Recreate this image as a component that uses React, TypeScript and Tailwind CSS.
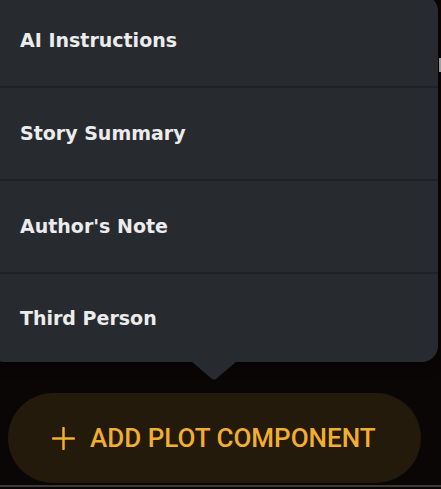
const ITEMS = ['AI Instructions', 'Story Summary', "Author's Note", 'Third Person'];

export default function App() {
  return (
    <div className="relative h-[489px] w-[441px] overflow-hidden bg-[#0a0605]">
      {/* faint content peeking at the right edge */}
      <div className="absolute right-0 top-[58px] h-[14px] w-[2px] bg-[#bfbfbf]" />

      <div className="flex flex-col">
        {/* popover menu */}
        <div className="relative z-10 ml-[-12px] mt-[-5px] w-[450px]">
          <div className="flex flex-col overflow-hidden rounded-[16px] bg-[#272b30] shadow-[0_4px_12px_rgba(0,0,0,0.5)]">
            {ITEMS.map((label, i) => (
              <div
                key={label}
                className={`flex items-center pl-[32px] ${i < ITEMS.length - 1 ? 'h-[93px] border-b-2 border-[#1e2125]' : 'h-[88px]'}`}
              >
                <span
                  className="text-[19px] font-bold text-[#ececec]"
                  style={{ fontFamily: '"DejaVu Sans", sans-serif' }}
                >
                  {label}
                </span>
              </div>
            ))}
          </div>
          <svg
            className="absolute left-[203px] top-[calc(100%-1px)]"
            width="46"
            height="20"
            viewBox="0 0 46 20"
            aria-hidden="true"
          >
            <path d="M0 0 L46 0 L25 18 Q23 19.5 21 18 Z" fill="#272b30" />
          </svg>
        </div>

        {/* add button */}
        <div className="px-[8px] pt-[31px]">
          <button className="flex h-[90px] w-[413px] items-center gap-[15px] rounded-full bg-[#231a0b] pl-[44px] text-[#f2ae2e]">
            <svg width="23" height="23" viewBox="0 0 23 23" aria-hidden="true">
              <path d="M11.5 1 V22 M1 11.5 H22" stroke="currentColor" strokeWidth="2.5" strokeLinecap="round" />
            </svg>
            <span
              className="text-[26px] font-medium"
              style={{ fontFamily: 'Roboto, sans-serif' }}
            >
              ADD PLOT COMPONENT
            </span>
          </button>
        </div>
      </div>

      <div className="absolute bottom-[2px] left-0 h-[2px] w-full bg-[#3a3a3a]" />
    </div>
  );
}
